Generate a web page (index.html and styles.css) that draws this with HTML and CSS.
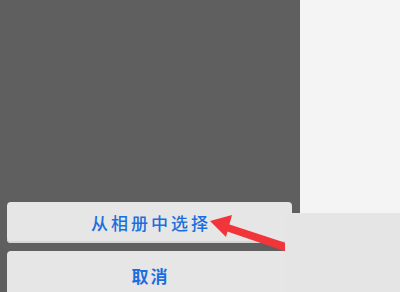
FILE: index.html
```html
<!DOCTYPE html>
<html lang="zh">
<head>
<meta charset="utf-8">
<link rel="stylesheet" href="styles.css">
</head>
<body>
<div class="screen">
  <div class="panel">
    <div class="sheet">
      <div class="btn btn-primary">从相册中选择</div>
      <div class="btn btn-cancel">取消</div>
    </div>
  </div>
  <div class="side"></div>
  <svg class="arrow" width="400" height="292" viewBox="0 0 400 292">
    <polygon points="222,222 292,245 290,253 220,229" fill="#f0363a"/>
    <polygon points="210,221 232,215 226,237" fill="#f0363a"/>
  </svg>
  <div class="patch"></div>
</div>
</body>
</html>
```
FILE: styles.css
```css
html, body {
  margin: 0;
  padding: 0;
}
body {
  width: 400px;
  height: 292px;
  overflow: hidden;
  font-family: "Noto Sans CJK SC", "Noto Sans", sans-serif;
}
.screen {
  position: relative;
  width: 400px;
  height: 292px;
  display: grid;
  grid-template-columns: 300px 100px;
}
.panel {
  background: #5e5f5e;
  overflow: hidden;
}
.sheet {
  display: flex;
  flex-direction: column;
  gap: 8px;
  padding: 202px 8px 0 7px;
}
.btn {
  background: #e6e6e6;
  border-radius: 4px;
  box-shadow: inset 0 -2px 0 #d6d6d6;
  display: flex;
  align-items: center;
  justify-content: center;
  color: #1a6fe0;
  font-size: 17px;
  line-height: 1;
}
.btn-primary {
  height: 41px;
  font-weight: 500;
  letter-spacing: 3px;
  padding-left: 3px;
}
.btn-cancel {
  height: 48px;
  font-weight: 700;
  letter-spacing: 2px;
  padding-left: 2px;
}
.side {
  background: #f4f4f4;
}
.arrow {
  position: absolute;
  left: 0;
  top: 0;
}
.patch {
  position: absolute;
  left: 285px;
  top: 213px;
  right: 0;
  bottom: 0;
  background: #e5e5e5;
}
```
